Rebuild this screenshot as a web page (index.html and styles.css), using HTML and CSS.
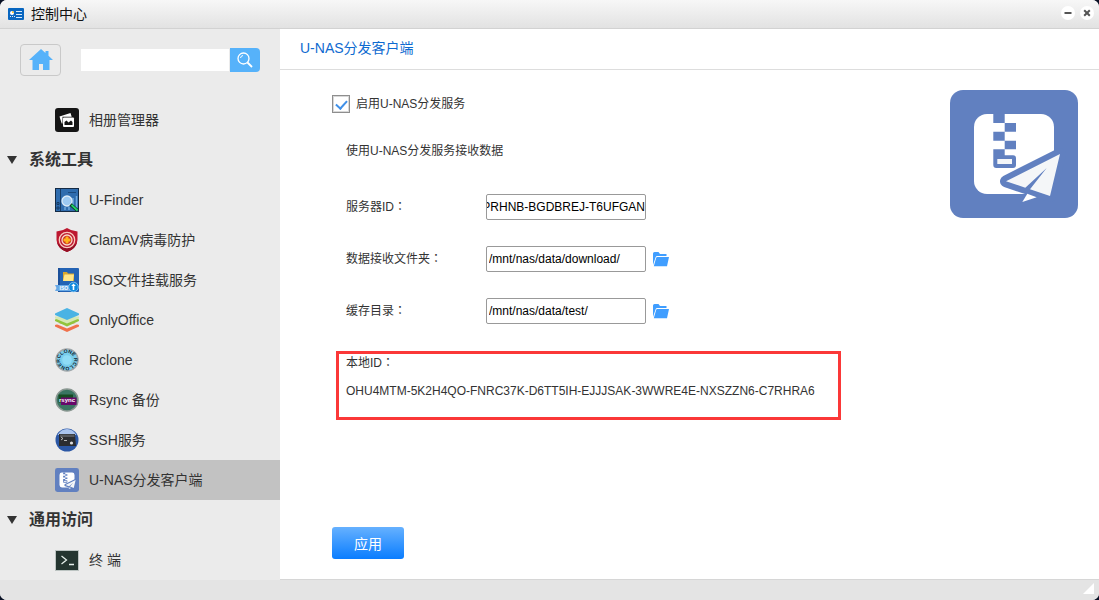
FILE: index.html
```html
<!DOCTYPE html>
<html lang="zh-CN">
<head>
    <meta charset="UTF-8">
    <meta name="viewport" content="width=device-width, initial-scale=1.0">
    <title>控制中心</title>
    <link rel="stylesheet" href="styles.css">
</head>
<body>

<svg class="defs" aria-hidden="true">
    <symbol id="logo" viewBox="0 0 128 128">
        <rect width="128" height="128" rx="13" fill="#6180c0"/>
        <rect x="24" y="24" width="80" height="80" rx="13" fill="#fff"/>
        <path fill="#6180c0" d="M43.300 24h11.400v9H66v8.700H54.700v9H66v8.600H54.700v6H63a3 3 0 0 1 3 3V75a3 3 0 0 1-3 3H46.300a3 3 0 0 1-3-3V59.300h11.400v-8.600H43.300v-9h11.400V33H43.300z"/>
        <path fill="#f4f6f8" d="M47.300 69H62v5H47.300z"/>
        <path fill="#6180c0" stroke="#6180c0" stroke-width="12" stroke-linejoin="round" d="M56 91.300L110 64l-10 42z"/>
        <path fill="#f4f6f8" d="M56 91.300L110 64l-10 42-20-6.700L96.700 78 75.300 97.700z"/>
        <path fill="#fff" d="M77.300 103.700l9.400 3.600-14.400 4.700z"/>
    </symbol>
    <symbol id="folder" viewBox="0 0 16 15">
        <path fill="#409eff" d="M0 13V1.500Q0 0 1.500 0h4l1.500 2h6.500v2H4.200Q3 4 2.600 5.200z"/>
        <path fill="#409eff" d="M4.200 5H16l-2 9.200H.800L3.200 5.800Q3.500 5 4.200 5z"/>
    </symbol>
</svg>

<div class="window">
    <header class="titlebar">
        <svg class="title-icon" viewBox="0 0 16 12">
            <rect width="16" height="12" rx="1" fill="#0866c0"/>
            <circle cx="4" cy="5" r="2" fill="#fff"/>
            <path fill="#ffc83c" d="M4 5V3a2 2 0 0 1 2 2z"/>
            <path stroke="#d5e9fb" d="M8 3.500h6M8 6.500h6M8 9.500h6"/>
            <path stroke="#d5e9fb" stroke-dasharray="1 1" d="M2 8.500h5"/>
        </svg>
        <h1>控制中心</h1>
        <button class="win-btn" aria-label="最小化"><svg viewBox="0 0 14 14"><path d="M3.500 7h7" stroke="#555" stroke-width="2"/></svg></button>
        <button class="win-btn" aria-label="关闭"><svg viewBox="0 0 14 14"><path d="M4.200 4.200l5.600 5.600M9.800 4.200L4.200 9.800" stroke="#555" stroke-width="2"/></svg></button>
    </header>

    <div class="main">
        <aside class="sidebar">
            <form class="search">
                <button type="button" class="home" aria-label="主页">
                    <svg viewBox="0 0 24 22"><path fill="#56b2fa" d="M12 0l4.500 4V2h3v4.800L24 11h-3.500v10H14v-6h-4v6H3.500V11H0z"/></svg>
                </button>
                <input type="search" class="search-input" aria-label="搜索">
                <button type="submit" class="search-btn" aria-label="搜索">
                    <svg viewBox="0 0 16 16" fill="none" stroke="#fff"><circle cx="6.500" cy="6.500" r="5.500" stroke-width="1.300"/><path d="M3.500 6a3 3 0 0 1 2.500-2.500" stroke-width="1"/><path d="M10.500 10.500L15 15" stroke-width="1.800"/></svg>
                </button>
            </form>

            <nav class="menu">
                <a href="#" class="item">
                    <svg viewBox="0 0 24 24">
                        <rect width="24" height="24" rx="3" fill="#151515"/>
                        <path fill="#fff" d="M4.500 8.500L15.500 5l1.200 3.700H7.500v6.800H6.700z"/>
                        <rect x="8" y="9.500" width="11" height="9.500" rx="1" fill="#fff"/>
                        <path fill="#151515" d="M9.500 17v-3l2-1.500 2 2 2.500-2 1.500 1.500v3z"/>
                    </svg>
                    相册管理器
                </a>
                <h2>系统工具</h2>
                <a href="#" class="item">
                    <svg viewBox="0 0 24 24">
                        <rect x=".5" y=".5" width="23" height="23" fill="#2f6cae" stroke="#142b45"/>
                        <path stroke="#173c66" d="M5.500 1v22"/>
                        <path stroke="#1b4a7d" d="M13 4.500h8"/>
                        <path stroke="#6fa8dc" stroke-width="1.500" d="M10 19v3M14 19v3M18 10v9M21.500 8v14"/>
                        <path fill="none" stroke="#173c66" d="M2 14.500h2v2H2zM2 19h2v2H2z"/>
                        <circle cx="12" cy="13" r="5" fill="#9cc9f2" stroke="#dcebf8" stroke-width="1.300"/>
                        <path d="M15.500 16.500l7 6" stroke="#0d3c22" stroke-width="3.500"/>
                        <path d="M16.500 17l6 5.500" stroke="#20d468" stroke-width="1.800"/>
                    </svg>
                    U-Finder
                </a>
                <a href="#" class="item">
                    <svg viewBox="0 0 24 24">
                        <path fill="#bd1830" d="M12 0q4.500 3.200 10.500 3.500V12Q22 20.500 12 24 2 20.500 1.500 12V3.500Q7.500 3.200 12 0z"/>
                        <path fill="#951025" d="M12 20q7-1 10-6-1.500 7.500-10 10-8.500-2.500-10-10 3 5 10 6z"/>
                        <circle cx="12" cy="12" r="7.700" fill="none" stroke="#f7c9bd" stroke-width="1.300"/>
                        <circle cx="12" cy="12" r="5" fill="#c92a22" stroke="#f9d9ca" stroke-width="1.300"/>
                        <path fill="#ffb21c" d="M10.500 8.500h3v2h2v3h-2v2h-3v-2h-2v-3h2z"/>
                    </svg>
                    ClamAV病毒防护
                </a>
                <a href="#" class="item">
                    <svg viewBox="0 0 24 24">
                        <rect x="3" width="21" height="24" rx="1" fill="#2463b4"/>
                        <path fill="#1b509a" d="M3 0h2v24H3z"/>
                        <path fill="#d9a72e" d="M8 4h4l1 1.500h6V13H8z"/>
                        <path fill="#ffe58a" d="M9.500 6.500H19L18 13H8z"/>
                        <path fill="#68a9e6" d="M0 17h16v6H0l1.500-3z"/>
                        <text x="4.500" y="22" font-size="5" font-weight="bold" fill="#fff">ISO</text>
                        <circle cx="18.500" cy="19" r="4.800" fill="#1289dd" stroke="#8bcaf5" stroke-width=".8"/>
                        <path fill="#fff" d="M18.500 15.500l2.300 2.500h-1.500v4h-1.600v-4h-1.500z"/>
                    </svg>
                    ISO文件挂载服务
                </a>
                <a href="#" class="item">
                    <svg viewBox="0 0 24 24">
                        <path fill="#f0714b" d="M0 17l12-4 12 4v1.500L12 24 0 18.500z"/>
                        <path fill="#ebebeb" d="M0 15.500h24L12 20.500z"/>
                        <path fill="#91c43c" d="M0 11.500L12 8l12 3.500V13l-12 5.500L0 13z"/>
                        <path fill="#d6e8b4" d="M0 10.500v-2h24v2l-12 5z"/>
                        <path fill="#4ab3e4" d="M0 5.500L12 0l12 5.500V7l-12 5L0 7z"/>
                    </svg>
                    OnlyOffice
                </a>
                <a href="#" class="item">
                    <svg viewBox="0 0 24 24">
                        <circle cx="12" cy="12" r="11" fill="#78cdec" stroke="#a1a8ab" stroke-width="1.500"/>
                        <path id="ring" fill="none" d="M5.500 14.500a7 7 0 1 1 13 0a7 7 0 0 1-13 0"/>
                        <text font-size="5" font-weight="bold" fill="#10222c"><textPath href="#ring">RCLONE RCLONE</textPath></text>
                        <circle cx="12" cy="12" r="4.800" fill="#8edcf7"/>
                    </svg>
                    Rclone
                </a>
                <a href="#" class="item">
                    <svg viewBox="0 0 24 24">
                        <circle cx="12" cy="12" r="11" fill="#3a7562" stroke="#8b9892" stroke-width="1.500"/>
                        <path fill="#174c22" d="M3.500 6.500h14.500v8H3.500z"/>
                        <path fill="#68086a" d="M6 9.500h15.500V17H6z"/>
                        <text x="4" y="14" font-size="6" font-weight="bold" fill="#fff">rsync</text>
                    </svg>
                    Rsync 备份
                </a>
                <a href="#" class="item">
                    <svg viewBox="0 0 24 24">
                        <circle cx="12" cy="12" r="11.500" fill="#2b57a5"/>
                        <path fill="#aac4ee" d="M2.500 7Q6 1 12 1t9.500 6z"/>
                        <path fill="#2b2d31" d="M4 6h16l1 12H4z"/>
                        <path fill="#55585d" d="M5 6.500h14.500V9H5z"/>
                        <path d="M6 9l2 1.500L6 12M9 12.500h3" fill="none" stroke="#dcdcdc" stroke-width=".8"/>
                        <circle cx="16.500" cy="15" r="1.600" fill="#dedede"/>
                    </svg>
                    SSH服务
                </a>
                <a href="#" class="item active">
                    <svg><use href="#logo"/></svg>
                    U-NAS分发客户端
                </a>
                <h2>通用访问</h2>
                <a href="#" class="item">
                    <svg viewBox="0 0 24 24">
                        <path fill="#243530" stroke="#bcc4c2" d="M.5 2.500h23v20H.5z"/>
                        <path d="M6.500 8l5 4-5 4" fill="none" stroke="#e4eeea" stroke-width="1.300"/>
                        <path d="M14 16.500h5" stroke="#e4eeea" stroke-width="1.300"/>
                    </svg>
                    终 端
                </a>
            </nav>
        </aside>

        <main class="content">
            <h2 class="page-title">U-NAS分发客户端</h2>
            <div class="panel">
                <form class="settings">
                    <label class="enable"><input type="checkbox" checked>启用U-NAS分发服务</label>
                    <p class="desc">使用U-NAS分发服务接收数据</p>
                    <div class="fields">
                        <div class="field">
                            <label for="server-id">服务器ID<span class="colon" lang="zh-TW">：</span></label>
                            <input type="text" id="server-id" class="scrolled" value="PRHNB-BGDBREJ-T6UFGAN">
                        </div>
                        <div class="field">
                            <label for="recv-dir">数据接收文件夹<span class="colon" lang="zh-TW">：</span></label>
                            <input type="text" id="recv-dir" value="/mnt/nas/data/download/">
                            <button type="button" class="browse" aria-label="选择文件夹"><svg><use href="#folder"/></svg></button>
                        </div>
                        <div class="field">
                            <label for="cache-dir">缓存目录<span class="colon" lang="zh-TW">：</span></label>
                            <input type="text" id="cache-dir" value="/mnt/nas/data/test/">
                            <button type="button" class="browse" aria-label="选择文件夹"><svg><use href="#folder"/></svg></button>
                        </div>
                    </div>
                    <div class="local-id">
                        <p>本地ID<span class="colon" lang="zh-TW">：</span></p>
                        <p>OHU4MTM-5K2H4QO-FNRC37K-D6TT5IH-EJJJSAK-3WWRE4E-NXSZZN6-C7RHRA6</p>
                    </div>
                    <button type="submit" class="apply">应用</button>
                </form>
                <svg class="logo"><use href="#logo"/></svg>
            </div>
        </main>
    </div>

    <footer class="statusbar">
        <svg viewBox="0 0 11 11"><path fill="#fff" d="M11 0v11H0z"/></svg>
    </footer>
</div>

</body>
</html>
```
FILE: styles.css
```css
* { box-sizing: border-box; }
body { margin: 0; background: #0a1226; color: #333; font: 12px/18px "Liberation Sans", "Noto Sans CJK SC", sans-serif; }
h1, h2, p { margin: 0; }
button { padding: 0; border: 0; background: none; cursor: pointer; }
button, input { font-family: inherit; }
svg { display: block; }
.defs { display: none; }

.window { display: flex; flex-direction: column; min-height: 100vh; border-radius: 7px; overflow: hidden; background: #fff; }

/* title bar */
.titlebar { display: flex; align-items: center; gap: 5px; height: 29px; padding: 0 5px 0 8px; border-bottom: 1px solid #d2d2d2; background: linear-gradient(#f7f7f7, #e2e2e2); }
.titlebar h1 { flex: 1; padding-left: 2px; color: #111; font-size: 14px; font-weight: normal; }
.title-icon { width: 16px; height: 12px; }
.win-btn { width: 14px; height: 14px; margin-bottom: 3px; border-radius: 50%; background: #fff; }

.main { display: flex; flex: 1; }

/* sidebar */
.sidebar { flex: 0 0 280px; min-width: 0; background: #ebebeb; }
.search { display: flex; align-items: center; height: 71px; padding: 0 20px 9px; }
.home { display: flex; align-items: center; justify-content: center; width: 41px; height: 32px; margin-right: 20px; border: 1px solid #c9c9c9; border-radius: 4px; }
.home svg { width: 24px; height: 22px; }
.search-input { flex: 1; min-width: 0; height: 22px; padding: 0 4px; border: 0; background: #fff; }
.search-btn { display: flex; align-items: center; justify-content: center; width: 30px; height: 24px; margin-left: 1px; border-radius: 0 4px 4px 0; background: #56b2fa; }
.search-btn svg { width: 16px; height: 16px; }

.menu h2 { display: flex; align-items: center; gap: 12px; height: 40px; padding-left: 7px; font-size: 16px; }
.menu h2::before { content: ""; border: 5px solid transparent; border-top: 8px solid #333; border-bottom: 0; }
.item { display: flex; align-items: center; gap: 10px; height: 40px; padding-left: 55px; color: #333; font-size: 14px; text-decoration: none; }
.item svg { width: 24px; height: 24px; overflow: visible; }
.item.active { background: #c2c2c2; }

/* content */
.content { display: flex; flex-direction: column; flex: 1; border-bottom: 1px solid #d6d6d6; }
.page-title { height: 41px; padding-left: 20px; border-bottom: 1px solid #ddd; color: #0e6ad0; font-size: 14px; font-weight: normal; line-height: 38px; }
.panel { display: flex; flex: 1; align-items: flex-start; justify-content: space-between; padding: 20px 21px 20px 52px; }
.logo { flex: none; width: 128px; height: 128px; }

.settings { display: flex; flex-direction: column; align-items: flex-start; align-self: stretch; padding-top: 5px; }
.enable { display: flex; align-items: center; gap: 6px; }
.enable input { display: flex; align-items: center; justify-content: center; width: 18px; height: 18px; margin: 0; border: 1px solid #8e8e8e; background: #fff; box-shadow: inset 0 0 0 1px #d8d8d8; appearance: none; }
.enable input:checked::before { content: ""; width: 5px; height: 9px; margin-bottom: 2px; border: solid #4090e8; border-width: 0 2px 2px 0; transform: rotate(42deg); }
.desc { margin-top: 29px; padding-left: 14px; }

.fields { display: flex; flex-direction: column; gap: 26px; margin-top: 34px; padding-left: 14px; }
.field { display: flex; align-items: center; }
.field label { width: 140px; }
.field input { width: 160px; height: 26px; padding: 0 2px; border: 1px solid #999; border-radius: 2px; color: #000; font-size: 12px; }
.field .scrolled { padding: 0; direction: rtl; }
.browse { margin-left: 7px; }
.browse svg { width: 16px; height: 15px; }

/* centred full-width colon */
.colon { font-family: "Noto Sans CJK TC", sans-serif; line-height: 1; }

.local-id { margin: 27px 0 0 4px; width: 505px; max-width: 100%; padding: 0 7px 17px; border: 3px solid #fb3838; }
.local-id p + p { margin-top: 10px; }

.apply { width: 72px; height: 32px; margin-top: auto; border-radius: 3px; background: linear-gradient(#66b1ff, #0a7dff); color: #fff; font-size: 14px; }

/* status bar */
.statusbar { display: flex; align-items: center; justify-content: flex-end; height: 20px; padding-right: 5px; background: #e4e4e4; }
.statusbar svg { width: 11px; height: 11px; margin-bottom: 4px; }
```
